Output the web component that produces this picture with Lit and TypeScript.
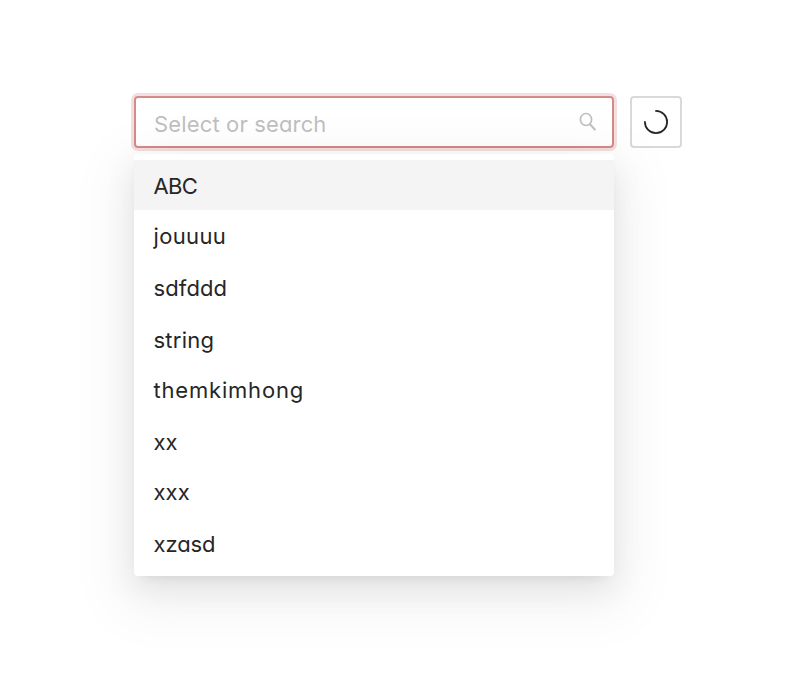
import { LitElement, html, css } from "lit";
import { customElement } from "lit/decorators.js";
import { styleMap } from "lit/directives/style-map.js";

interface Option {
  label: string;
  height: number;
  tracking: number;
}

const OPTIONS: Option[] = [
  { label: "ABC", height: 50, tracking: -0.6 },
  { label: "jouuuu", height: 52, tracking: 0.35 },
  { label: "sdfddd", height: 52, tracking: 0.1 },
  { label: "string", height: 50, tracking: 0.25 },
  { label: "themkimhong", height: 52, tracking: 0.8 },
  { label: "xx", height: 50, tracking: 0 },
  { label: "xxx", height: 52, tracking: 0.1 },
  { label: "xzasd", height: 52, tracking: -0.1 },
];

@customElement("app-root")
export class AppRoot extends LitElement {
  static styles = css`
    :host {
      display: block;
      box-sizing: border-box;
      height: 698px;
      padding: 96px 0 0 134px;
      overflow: hidden;
      background: #fff;
      color: #262626;
      font-family: Inter, "Liberation Sans", sans-serif;
      font-feature-settings: "cv11" 1;
      font-size: 22px;
      font-weight: 370;
    }
    .bar {
      display: flex;
      gap: 16px;
    }
    .field {
      box-sizing: border-box;
      width: 480px;
      height: 52px;
      display: flex;
      align-items: center;
      justify-content: space-between;
      padding: 4px 15.5px 0 18px;
      border: 2px solid #d68a88;
      border-radius: 4px;
      box-shadow: 0 0 0 3px #f3dfdf;
    }
    .placeholder {
      color: #bfbfbf;
      white-space: pre;
      letter-spacing: 0.15px;
    }
    .search {
      margin-top: -4px;
    }
    .refresh {
      box-sizing: border-box;
      width: 52px;
      height: 52px;
      display: flex;
      align-items: center;
      justify-content: center;
      border: 2px solid #d9d9d9;
      border-radius: 4px;
    }
    svg {
      display: block;
    }
    .menu {
      position: relative;
      box-sizing: border-box;
      width: 480px;
      height: 422px;
      margin-top: 6px;
      padding: 6px 0;
      border-radius: 4px;
      background: #fff;
      box-shadow:
        0 6px 12px -8px rgba(0, 0, 0, 0.12),
        0 12px 32px 0 rgba(0, 0, 0, 0.08),
        0 18px 56px 16px rgba(0, 0, 0, 0.05);
    }
    .option {
      box-sizing: border-box;
      padding: 1px 19.5px 0;
      line-height: 50px;
    }
    .active {
      background: #f4f4f4;
    }
  `;

  render() {
    return html`
      <div class="bar">
        <div class="field">
          <span class="placeholder">Select or search</span>
          <svg class="search" width="18" height="20" viewBox="0 0 18 20" fill="none" stroke="#bfbfbf">
            <ellipse cx="7" cy="7.5" rx="5.6" ry="6" stroke-width="1.7" />
            <path d="M10.8 12 L16.4 18.2" stroke-width="2" />
          </svg>
        </div>
        <div class="refresh">
          <svg width="26" height="26" viewBox="0 0 26 26" fill="none" stroke="#262626">
            <path d="M13 1.9 A11.1 11.1 0 1 1 1.9 13" stroke-width="1.8" stroke-linecap="round" />
          </svg>
        </div>
      </div>
      <div class="menu">
        ${OPTIONS.map(
          (o, i) => html`<div
            class="option ${i === 0 ? "active" : ""}"
            style=${styleMap({ height: `${o.height}px`, letterSpacing: `${o.tracking}px` })}
          >${o.label}</div>`,
        )}
      </div>
    `;
  }
}
